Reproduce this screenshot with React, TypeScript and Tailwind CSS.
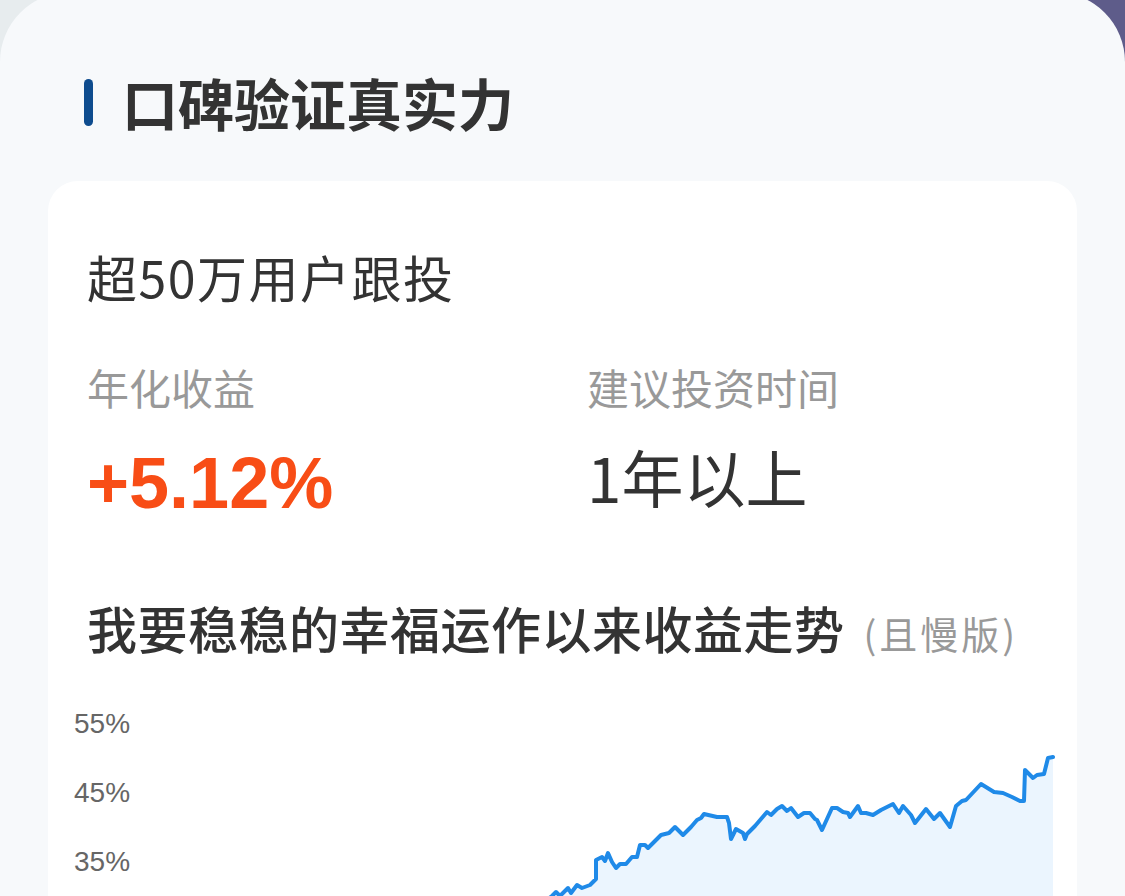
const cjk = "font-['Noto_Sans_CJK_SC',sans-serif]";

// page-space points of the return curve, shifted into the svg below
const curve: [number, number][] = [
  [480, 940], [520, 920], [552, 896], [556, 892], [560, 896], [568, 888], [571, 893],
  [577, 885], [582, 888], [590, 885], [596, 879], [596, 860], [602, 857], [605, 861],
  [608, 853], [612, 862], [616, 868], [620, 864], [626, 864], [632, 857], [637, 857],
  [640, 845], [645, 845], [648, 848], [655, 841], [661, 835], [669, 833], [675, 827],
  [683, 835], [691, 827], [697, 820], [701, 818], [704, 814], [717, 817], [727, 817],
  [729, 823], [731, 839], [736, 829], [743, 833], [745, 839], [747, 834], [755, 826],
  [761, 819], [767, 812], [771, 815], [777, 809], [782, 806], [787, 811], [791, 808],
  [798, 817], [804, 813], [810, 813], [815, 819], [817, 820], [822, 830], [832, 808],
  [837, 808], [843, 812], [848, 813], [850, 817], [858, 806], [861, 813], [866, 813],
  [873, 815], [881, 810], [893, 804], [899, 813], [903, 806], [911, 815], [915, 823],
  [926, 809], [934, 819], [940, 813], [950, 827], [956, 806], [962, 801], [966, 800],
  [981, 784], [994, 792], [1003, 793], [1012, 797], [1020, 801], [1024, 801], [1025, 770],
  [1033, 778], [1037, 775], [1044, 774], [1048, 758], [1053, 757],
];

const ORIGIN_X = 134;
const ORIGIN_Y = 689;
const CHART_H = 220;

const ReturnChart = () => {
  const pts = curve.map(([x, y]) => [x - ORIGIN_X, y - ORIGIN_Y]);
  const line = pts.map(([x, y]) => `${x},${y}`).join(" ");
  const last = pts[pts.length - 1];
  const area = `${pts[0][0]},${CHART_H} ${line} ${last[0]},${CHART_H}`;

  return (
    <div className="flex -ml-[13px] -mr-[24px] mt-[37px]">
      <div className="w-[60px] shrink-0 flex flex-col">
        {["55%", "45%", "35%"].map((label) => (
          <div
            key={label}
            className="h-[69px] flex items-center font-['Liberation_Sans',sans-serif] text-[28px] leading-none text-[#666]"
          >
            {label}
          </div>
        ))}
      </div>
      <svg width={943} height={CHART_H} viewBox={`0 0 943 ${CHART_H}`} className="shrink-0">
        <polygon points={area} fill="#ebf5fe" />
        <polyline
          points={line}
          fill="none"
          stroke="#1f8ae8"
          strokeWidth={4}
          strokeLinejoin="round"
          strokeLinecap="round"
        />
      </svg>
    </div>
  );
};

export default function App() {
  return (
    <div className="h-[896px] overflow-hidden bg-[linear-gradient(90deg,#e7ecee_0%,#e7ecee_90%,#5e5c8a_96%)]">
      <div className={`-mt-2 min-h-[920px] rounded-t-[70px] bg-[#f7f9fb] pt-[82px] ${cjk}`}>
        {/* Section heading */}
        <div className="flex items-center pl-[84px]">
          <div className="h-[47px] w-[9px] rounded-full bg-[#0e4c8e]" />
          <h2 className="ml-[29px] text-[56px] font-bold leading-none text-[#333]">
            口碑验证真实力
          </h2>
        </div>

        {/* Card */}
        <div className="mx-[48px] mt-[51px] rounded-[30px] bg-white pl-[39px] pr-[24px] pt-[70px] pb-10">
          <div className="text-[50px] leading-none tracking-[1.5px] text-[#333]">超50万用户跟投</div>

          <div className="flex mt-[65px]">
            <div className="w-[500px] shrink-0">
              <div className="text-[42px] leading-none text-[#999]">年化收益</div>
              <div className="mt-[39px] font-['Liberation_Sans',sans-serif] text-[72px] font-bold leading-none text-[#f84d16]">
                +5.12%
              </div>
            </div>
            <div>
              <div className="text-[42px] leading-none text-[#999]">建议投资时间</div>
              <div className="mt-[37px] text-[62px] leading-none text-[#333]">1年以上</div>
            </div>
          </div>

          <div className="flex items-baseline mt-[83px]">
            <span className="text-[50px] font-medium leading-none tracking-[0.5px] text-[#333]">
              我要稳稳的幸福运作以来收益走势
            </span>
            <span className="ml-[19px] text-[38px] leading-none tracking-[3px] text-[#999]">(且慢版)</span>
          </div>

          <ReturnChart />
        </div>
      </div>
    </div>
  );
}
